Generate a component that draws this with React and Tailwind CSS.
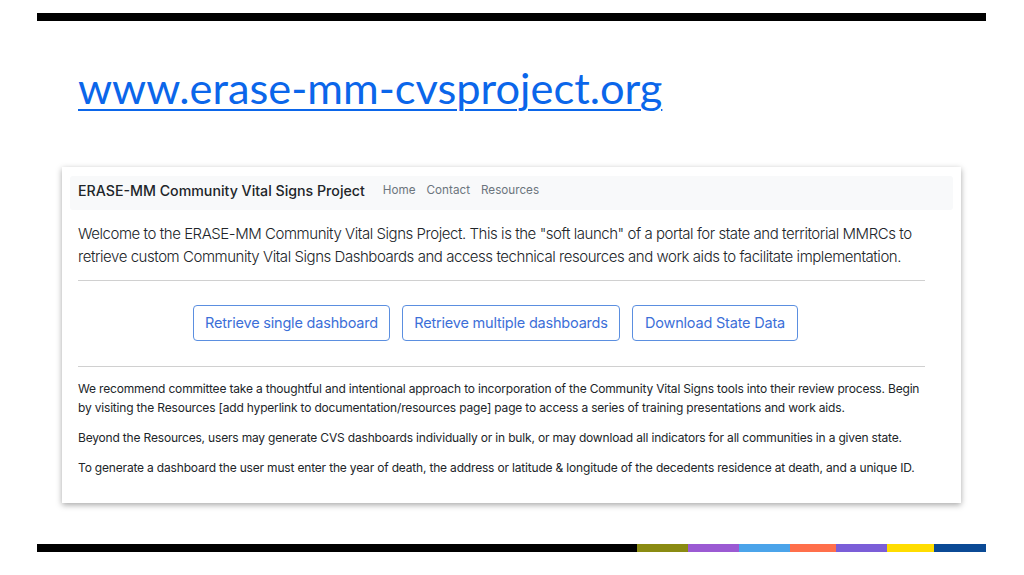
import React from 'react';

const stripes = [
  { w: 'w-[600px]', c: 'bg-black' },
  { w: 'w-[51px]', c: 'bg-[#8a8b12]' },
  { w: 'w-[51px]', c: 'bg-[#9b5ad3]' },
  { w: 'w-[51px]', c: 'bg-[#4ba4ea]' },
  { w: 'w-[46px]', c: 'bg-[#ff6f4b]' },
  { w: 'w-[51px]', c: 'bg-[#7b5ed8]' },
  { w: 'w-[47px]', c: 'bg-[#ffdd00]' },
  { w: 'w-[52px]', c: 'bg-[#0b4a95]' },
];

function SitePreview() {
  return (
    <div className="ml-[62px] mt-[54px] w-[899px] h-[336px] bg-white shadow-[0_2px_6px_rgba(0,0,0,0.35)] px-[8px] pt-[9px] font-['Inter',sans-serif] text-[#212529]">
      {/* Navbar */}
      <div className="h-[34px] bg-[#f8f9fa] rounded-[3px] flex items-center px-[8px] pb-[5px]">
        <span className="text-[14.2px] font-medium">ERASE-MM Community Vital Signs Project</span>
        <nav className="flex gap-[11px] ml-[18px] text-[11.7px] text-[#6c757d]">
          <a>Home</a>
          <a>Contact</a>
          <a>Resources</a>
        </nav>
      </div>

      <div className="px-[8px]">
        <p className="mt-[12px] text-[15px] leading-[23px] tracking-[-0.45px] font-light whitespace-nowrap">
          Welcome to the ERASE-MM Community Vital Signs Project. This is the "soft launch" of a portal for state and territorial MMRCs to
          <br />
          retrieve custom Community Vital Signs Dashboards and access technical resources and work aids to facilitate implementation.
        </p>
        <hr className="mt-[12px] mr-[20px] border-[#d0d0d0]" />

        <div className="flex justify-center gap-[12px] mt-[24px] pr-[32px]">
          <button className="h-[36px] w-[197px] border border-[#5b8fe0] rounded-[4px] text-[#3c6fd8] text-[14.5px] tracking-[-0.2px]">Retrieve single dashboard</button>
          <button className="h-[36px] w-[218px] border border-[#5b8fe0] rounded-[4px] text-[#3c6fd8] text-[14.5px] tracking-[-0.2px]">Retrieve multiple dashboards</button>
          <button className="h-[36px] w-[166px] border border-[#5b8fe0] rounded-[4px] text-[#3c6fd8] text-[14.5px] tracking-[-0.2px]">Download State Data</button>
        </div>

        <hr className="mt-[25px] mr-[20px] border-[#d0d0d0]" />

        <div className="mt-[12px] text-[12px] leading-[19px] tracking-[-0.18px] whitespace-nowrap">
          <p>
            We recommend committee take a thoughtful and intentional approach to incorporation of the Community Vital Signs tools into their review process. Begin
            <br />
            by visiting the Resources [add hyperlink to documentation/resources page] page to access a series of training presentations and work aids.
          </p>
          <p className="mt-[11px]">
            Beyond the Resources, users may generate CVS dashboards individually or in bulk, or may download all indicators for all communities in a given state.
          </p>
          <p className="mt-[11px]">
            To generate a dashboard the user must enter the year of death, the address or latitude &amp; longitude of the decedents residence at death, and a unique ID.
          </p>
        </div>
      </div>
    </div>
  );
}

export default function App() {
  return (
    <div className="w-[1024px] h-[575px] bg-white overflow-hidden relative">
      <div className="pt-[13px]">
        <div className="ml-[37px] w-[949px] h-[8px] bg-black" />
      </div>
      <a
        href="#"
        className="block ml-[78px] mt-[40px] text-[43.4px] leading-[52px] text-[#0b66ea] underline decoration-[2px] underline-offset-[5px] font-['Lato',sans-serif] w-fit"
      >
        www.erase-mm-cvsproject.org
      </a>
      <SitePreview />
      <div className="absolute left-[37px] top-[544px] flex h-[8px]">
        {stripes.map((s, i) => (
          <div key={i} className={`${s.w} ${s.c} h-full`} />
        ))}
      </div>
    </div>
  );
}
